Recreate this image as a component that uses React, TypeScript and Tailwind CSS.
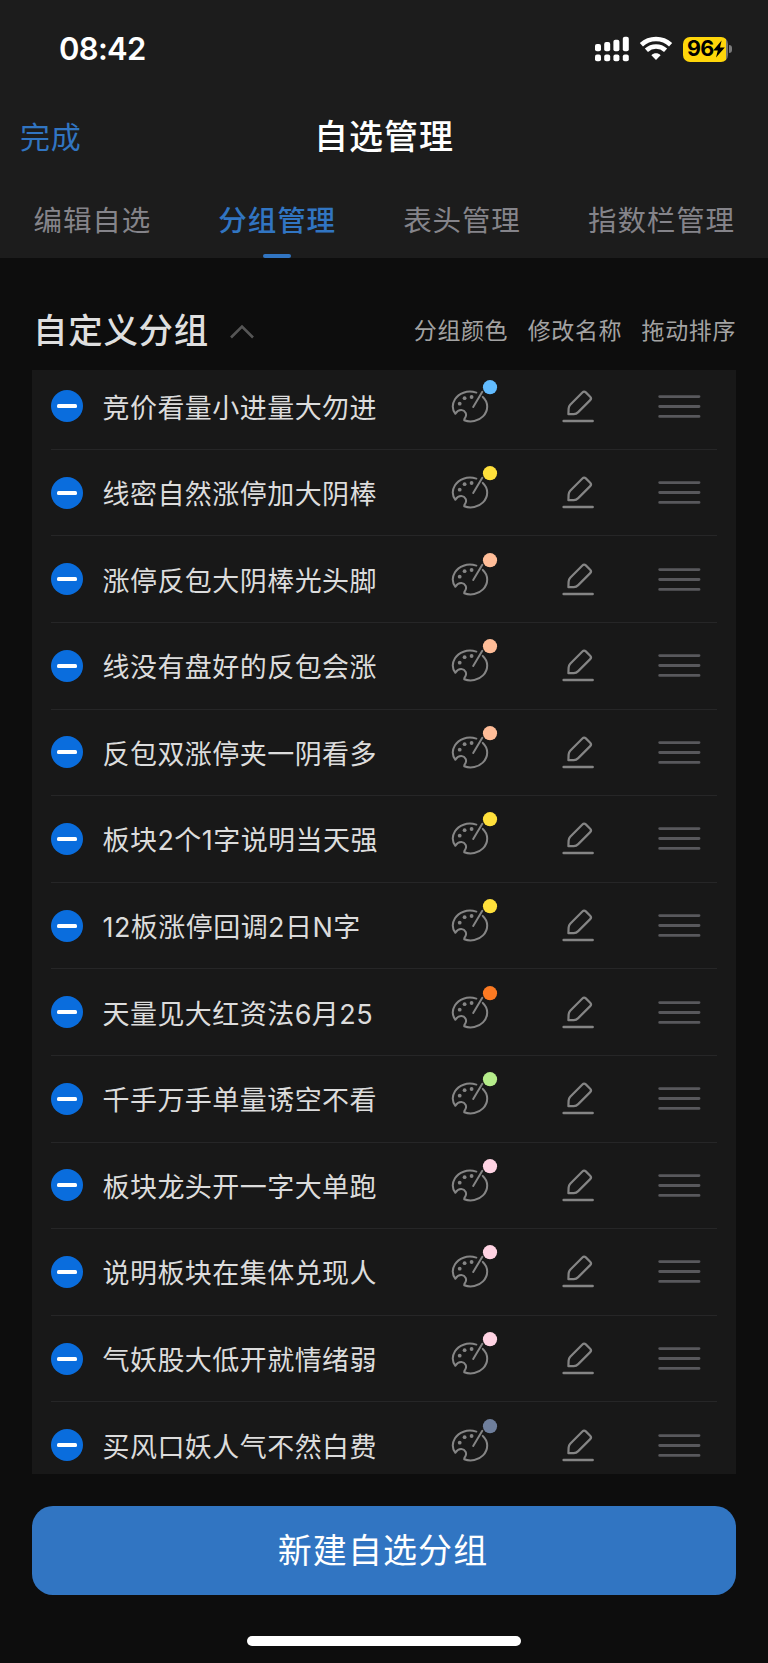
import React from 'react';

const TABS = [
  { label: '编辑自选', active: false },
  { label: '分组管理', active: true },
  { label: '表头管理', active: false },
  { label: '指数栏管理', active: false },
];

const COLUMNS = ['分组颜色', '修改名称', '拖动排序'];

const GROUPS = [
  { name: '竞价看量小进量大勿进', color: '#62bcff' },
  { name: '线密自然涨停加大阴棒', color: '#ffe03b' },
  { name: '涨停反包大阴棒光头脚', color: '#ffbd98' },
  { name: '线没有盘好的反包会涨', color: '#ffbd98' },
  { name: '反包双涨停夹一阴看多', color: '#ffbd98' },
  { name: '板块2个1字说明当天强', color: '#ffe03b' },
  { name: '12板涨停回调2日N字', color: '#ffe03b' },
  { name: '天量见大红资法6月25', color: '#fc7a22' },
  { name: '千手万手单量诱空不看', color: '#b5ec8a' },
  { name: '板块龙头开一字大单跑', color: '#ffd3e3' },
  { name: '说明板块在集体兑现人', color: '#ffd3e3' },
  { name: '气妖股大低开就情绪弱', color: '#ffd3e3' },
  { name: '买风口妖人气不然白费', color: '#6f7f9c' },
];

const SignalIcon = () => (
  <svg width="34" height="26" viewBox="0 0 34 26" fill="#fff">
    <rect x="0" y="8" width="6" height="7.2" rx="2" />
    <rect x="9.2" y="6" width="6" height="9.2" rx="2" />
    <rect x="18.4" y="3.7" width="6" height="11.5" rx="2" />
    <rect x="27.8" y="0.8" width="6" height="14.4" rx="2" />
    <rect x="0" y="18.6" width="6" height="6.6" rx="2" />
    <rect x="9.2" y="18.6" width="6" height="6.6" rx="2" />
    <rect x="18.4" y="18.6" width="6" height="6.6" rx="2" />
    <rect x="27.8" y="18.6" width="6" height="6.6" rx="2" />
  </svg>
);

const WifiIcon = () => (
  <svg width="34" height="26" viewBox="0 0 34 26" fill="none" stroke="#fff" strokeWidth="4.6">
    <path d="M2.4 8.7C10.6 1 23.4 1 31.6 8.7" />
    <path d="M7.4 14.2C12.9 9.2 21.1 9.2 26.6 14.2" />
    <path d="M12.4 19.2C15 16.6 19 16.6 21.6 19.2L17 23.9Z" fill="#fff" stroke="none" />
  </svg>
);

const Battery = () => (
  <div className="flex items-center">
    <div className="flex h-[25px] w-[45px] items-center overflow-hidden rounded-[7px] bg-[linear-gradient(90deg,#ffd60a_43px,#77766f_43px)] pl-1 text-[21.5px] leading-none font-bold text-black">
      <span className="tracking-[-0.8px]">96</span>
      <svg width="12" height="18" viewBox="0 0 12 18" fill="#000">
        <path d="M8.6 0.6L0.2 10.4H4.8L3 17.4L11.8 7.4H7Z" />
      </svg>
    </div>
    <div className="ml-[1px] h-2 w-[3px] rounded-r-full bg-[#7b7b7b]" />
  </div>
);

const PaletteIcon: React.FC<{ color: string }> = ({ color }) => (
  <svg width="48" height="57" viewBox="0 0 48 57" fill="none" stroke="#858585" strokeWidth="2" strokeLinecap="round" strokeLinejoin="round">
    <path d="M26.3 14.6C17 11.8 8.6 15.4 5 21.3C2 26.3 2.2 31.6 5.4 35.8C6.8 33.6 8.6 32 11.3 32.1C15.4 32.4 17.2 36.3 15.3 39.4C14.8 40.4 14.2 41 14.2 42.2C20.6 44.8 28.6 43 33 38.4C38.8 32.4 38.4 24 32.8 18.9" />
    <path d="M32.3 13.8L23.2 29" />
    <circle cx="9.7" cy="25.7" r="1.9" fill="#858585" stroke="none" />
    <circle cx="14.6" cy="20.2" r="1.9" fill="#858585" stroke="none" />
    <circle cx="21.6" cy="19" r="1.9" fill="#858585" stroke="none" />
    <circle cx="40" cy="9.2" r="7.1" fill={color} stroke="none" />
  </svg>
);

const EditIcon = () => (
  <svg width="36" height="37" viewBox="0 0 36 37" fill="none" stroke="#858585" strokeWidth="2.2" strokeLinecap="round" strokeLinejoin="round">
    <path d="M8.4 26.2L8.6 20.6C8.7 18.9 9.1 17.9 10.2 16.7L22.4 4.4C23.5 3.3 24.7 3.3 25.8 4.4L30.2 8.8C31.3 9.9 31.3 11 30.2 12.1L18.2 24.1C16.8 25.5 15.6 26 13.8 26.1Z" />
    <path d="M3.6 33.1H32.6" strokeWidth="2.5" />
  </svg>
);

const DragIcon = () => (
  <svg width="43" height="25" viewBox="0 0 43 25" stroke="#58585c" strokeWidth="2.9" strokeLinecap="round">
    <path d="M1.7 2.6H41M1.7 12.5H41M1.7 22.4H41" />
  </svg>
);

const GroupRow: React.FC<{ name: string; color: string }> = ({ name, color }) => (
  <div className="flex h-[86.6px] shrink-0 items-center border-b border-[#262627]">
    <div className="flex h-8 w-8 items-center justify-center rounded-full bg-[#0a6ddd]">
      <div className="h-1 w-5 rounded-[1.5px] bg-white" />
    </div>
    <div className="ml-[19.5px] w-[347.5px] pt-[4px] text-[27px] leading-none tracking-[0.45px] whitespace-nowrap text-[#dcdcdc]">{name}</div>
    <PaletteIcon color={color} />
    <div className="ml-[62px]">
      <EditIcon />
    </div>
    <div className="ml-[62px]">
      <DragIcon />
    </div>
  </div>
);

export default function App() {
  return (
    <div className="flex h-[1663px] w-[768px] flex-col overflow-hidden bg-[#0d0d0d] font-['Inter','Noto_Sans_CJK_SC',sans-serif]">
      <header className="h-[258px] shrink-0 bg-[#1c1c1c]">
        {/* Status bar */}
        <div className="flex h-[98px] items-center justify-between pr-9 pl-[59px]">
          <div className="pt-[1px] text-[31px] font-semibold tracking-[-0.7px] text-white">08:42</div>
          <div className="flex items-center">
            <SignalIcon />
            <div className="mr-[10px] ml-[10px]">
              <WifiIcon />
            </div>
            <Battery />
          </div>
        </div>

        {/* Title bar */}
        <div className="grid h-[78px] grid-cols-3 items-center px-5">
          <button className="text-left text-[30px] leading-none tracking-[0.8px] text-[#3175c2]">完成</button>
          <h1 className="text-center text-[34px] leading-none font-medium tracking-[1px] text-white">自选管理</h1>
        </div>

        {/* Tabs */}
        <nav className="flex h-[82px] justify-between pr-[33px] pl-[33.5px]">
          {TABS.map((tab) => (
            <div key={tab.label} className={`relative pt-[31px] text-[28.5px] leading-none tracking-[0.9px] ${tab.active ? 'font-medium text-[#3175c2]' : 'text-[#85848a]'}`}>
              {tab.label}
              {tab.active && <div className="absolute bottom-0 left-1/2 h-1 w-7 -translate-x-1/2 rounded-full bg-[#3175c2]" />}
            </div>
          ))}
        </nav>
      </header>

      <div className="flex h-[112.4px] shrink-0 items-center justify-between pt-[35px] pr-8 pl-[33px]">
        <div className="flex items-center">
          <h2 className="text-[34.4px] leading-none font-medium tracking-[0.8px] text-[#dfdfdf]">自定义分组</h2>
          <svg className="ml-[20px]" width="26" height="16" viewBox="0 0 26 16" fill="none" stroke="#555" strokeWidth="2.6">
            <path d="M2 13.5L13 2.5L24 13.5" />
          </svg>
        </div>
        <div className="flex gap-[19.5px] text-[23px] leading-none tracking-[0.6px] text-[#a3a3a3]">
          {COLUMNS.map((label) => (
            <span key={label}>{label}</span>
          ))}
        </div>
      </div>

      <main className="mx-8 h-[1104px] shrink-0 overflow-hidden bg-[#181818] px-[19px]">
        <div className="-mt-[7.2px] flex flex-col">
          {GROUPS.map((group) => (
            <GroupRow key={group.name} name={group.name} color={group.color} />
          ))}
        </div>
      </main>

      <button className="mx-8 mt-[31.6px] h-[89px] shrink-0 rounded-[21px] bg-[#3175c2] pt-[2px] pr-[2px] text-[34px] leading-none tracking-[1.1px] text-white">
        新建自选分组
      </button>

      <div className="mx-auto mt-[41px] h-[10px] w-[274px] shrink-0 rounded-full bg-white" />
    </div>
  );
}
